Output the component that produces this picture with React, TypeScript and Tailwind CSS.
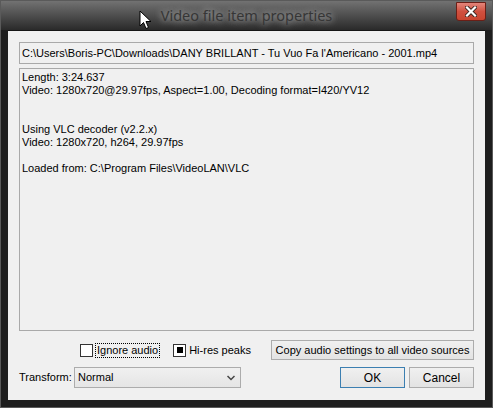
import React from "react";

const ui = { fontFamily: '"Liberation Sans", Arial, sans-serif' };

function Cursor() {
  return (
    <svg className="absolute left-[138px] top-[9px]" width="14" height="21" viewBox="0 0 14 21">
      <path d="M1 1 L1 16 L4.5 12.5 L7 18.5 L9.5 17.5 L7 11.5 L12 11.5 Z" fill="#fff" stroke="#000" strokeWidth="1" strokeLinejoin="round" />
    </svg>
  );
}

function CloseButton() {
  return (
    <div className="absolute left-[455px] top-[1px] w-[30px] h-[19px] border border-[#6b1f17] rounded-b-[3px] bg-gradient-to-b from-[#e3857b] via-[#d0503f] to-[#c8442f] flex items-center justify-center">
      <svg width="12" height="11" viewBox="0 0 12 11">
        <path d="M2 1.5 L10 9.5 M10 1.5 L2 9.5" stroke="#3a2520" strokeWidth="4" strokeLinecap="square" />
        <path d="M2 1.5 L10 9.5 M10 1.5 L2 9.5" stroke="#fff" strokeWidth="2.2" strokeLinecap="square" />
      </svg>
    </div>
  );
}

function Button({ label, focused, className }: { label: string; focused?: boolean; className: string }) {
  return (
    <div
      className={`${className} flex items-center justify-center whitespace-nowrap border bg-gradient-to-b from-[#f0f0f0] to-[#e3e3e3] text-black ${
        focused ? "border-[#3c7fb1]" : "border-[#acacac]"
      }`}
    >
      {label}
    </div>
  );
}

export default function App() {
  const info = [
    "Length: 3:24.637",
    "Video: 1280x720@29.97fps, Aspect=1.00, Decoding format=I420/YV12",
    "",
    "",
    "Using VLC decoder (v2.2.x)",
    "Video: 1280x720, h264, 29.97fps",
    "",
    "Loaded from: C:\\Program Files\\VideoLAN\\VLC",
  ];

  return (
    <div className="relative w-[493px] h-[408px] bg-[#1e1e1e] border border-[#5a5a5a] overflow-hidden" style={ui}>
      {/* title bar */}
      <div className="h-[29px] bg-gradient-to-b from-[#727272] via-[#4e4e4e] to-[#2a2a2a] flex items-start justify-center pt-[4px]">
        <span
          className="text-[14.5px] text-[#363636] leading-[20px] px-2"
          style={{ fontFamily: '"Noto Sans", "Open Sans", sans-serif', textShadow: "0 0 6px #aaa, 0 0 10px #999" }}
        >
          Video file item properties
        </span>
      </div>
      <CloseButton />
      <Cursor />

      {/* client area */}
      <div className="ml-[7px] w-[477px] h-[370px] bg-[#f0f0f0] border-t border-[#151515] px-[11px] pt-[11px] text-[11px] text-black">
        <div className="h-[22px] border border-[#a9a9a9] bg-[#f0f0f0] flex items-center pl-[2px] whitespace-nowrap leading-[13px]">
          C:\Users\Boris-PC\Downloads\DANY BRILLANT - Tu Vuo Fa l'Americano - 2001.mp4
        </div>
        <div className="mt-[4px] h-[263px] border border-[#a9a9a9] bg-[#f0f0f0] pl-[2px] pt-[2px]">
          {info.map((l, i) => (
            <div key={i} className="h-[13px] leading-[13px] whitespace-nowrap">
              {l}
            </div>
          ))}
        </div>

        <div className="mt-[9px] flex items-center h-[20px]">
          <div className="ml-[61px] w-[13px] h-[13px] border border-[#333] bg-white" />
          <span className="ml-[3px] px-[1px] leading-[13px] outline outline-1 outline-dotted outline-[#000]">Ignore audio</span>
          <div className="ml-[14px] w-[13px] h-[13px] border border-[#333] bg-white flex items-center justify-center">
            <div className="w-[6px] h-[6px] bg-black" />
          </div>
          <span className="ml-[3px] leading-[13px]">Hi-res peaks</span>
          <Button label="Copy audio settings to all video sources" className="ml-auto w-[203px] h-[20px] text-[11px]" />
        </div>

        <div className="mt-[7px] flex items-center h-[21px]">
          <span className="w-[55px]">Transform:</span>
          <div className="w-[167px] h-[21px] border border-[#acacac] bg-gradient-to-b from-[#f0f0f0] to-[#e5e5e5] flex items-center pl-[3px] pr-[5px]">
            <span className="flex-1">Normal</span>
            <svg width="8" height="6" viewBox="0 0 8 6">
              <path d="M0.5 1 L4 4.5 L7.5 1" fill="none" stroke="#444" strokeWidth="1.5" />
            </svg>
          </div>
          <Button label="OK" focused className="ml-auto w-[65px] h-[21px] text-[12px]" />
          <Button label="Cancel" className="ml-[4px] w-[65px] h-[21px] text-[12px]" />
        </div>
      </div>
    </div>
  );
}
